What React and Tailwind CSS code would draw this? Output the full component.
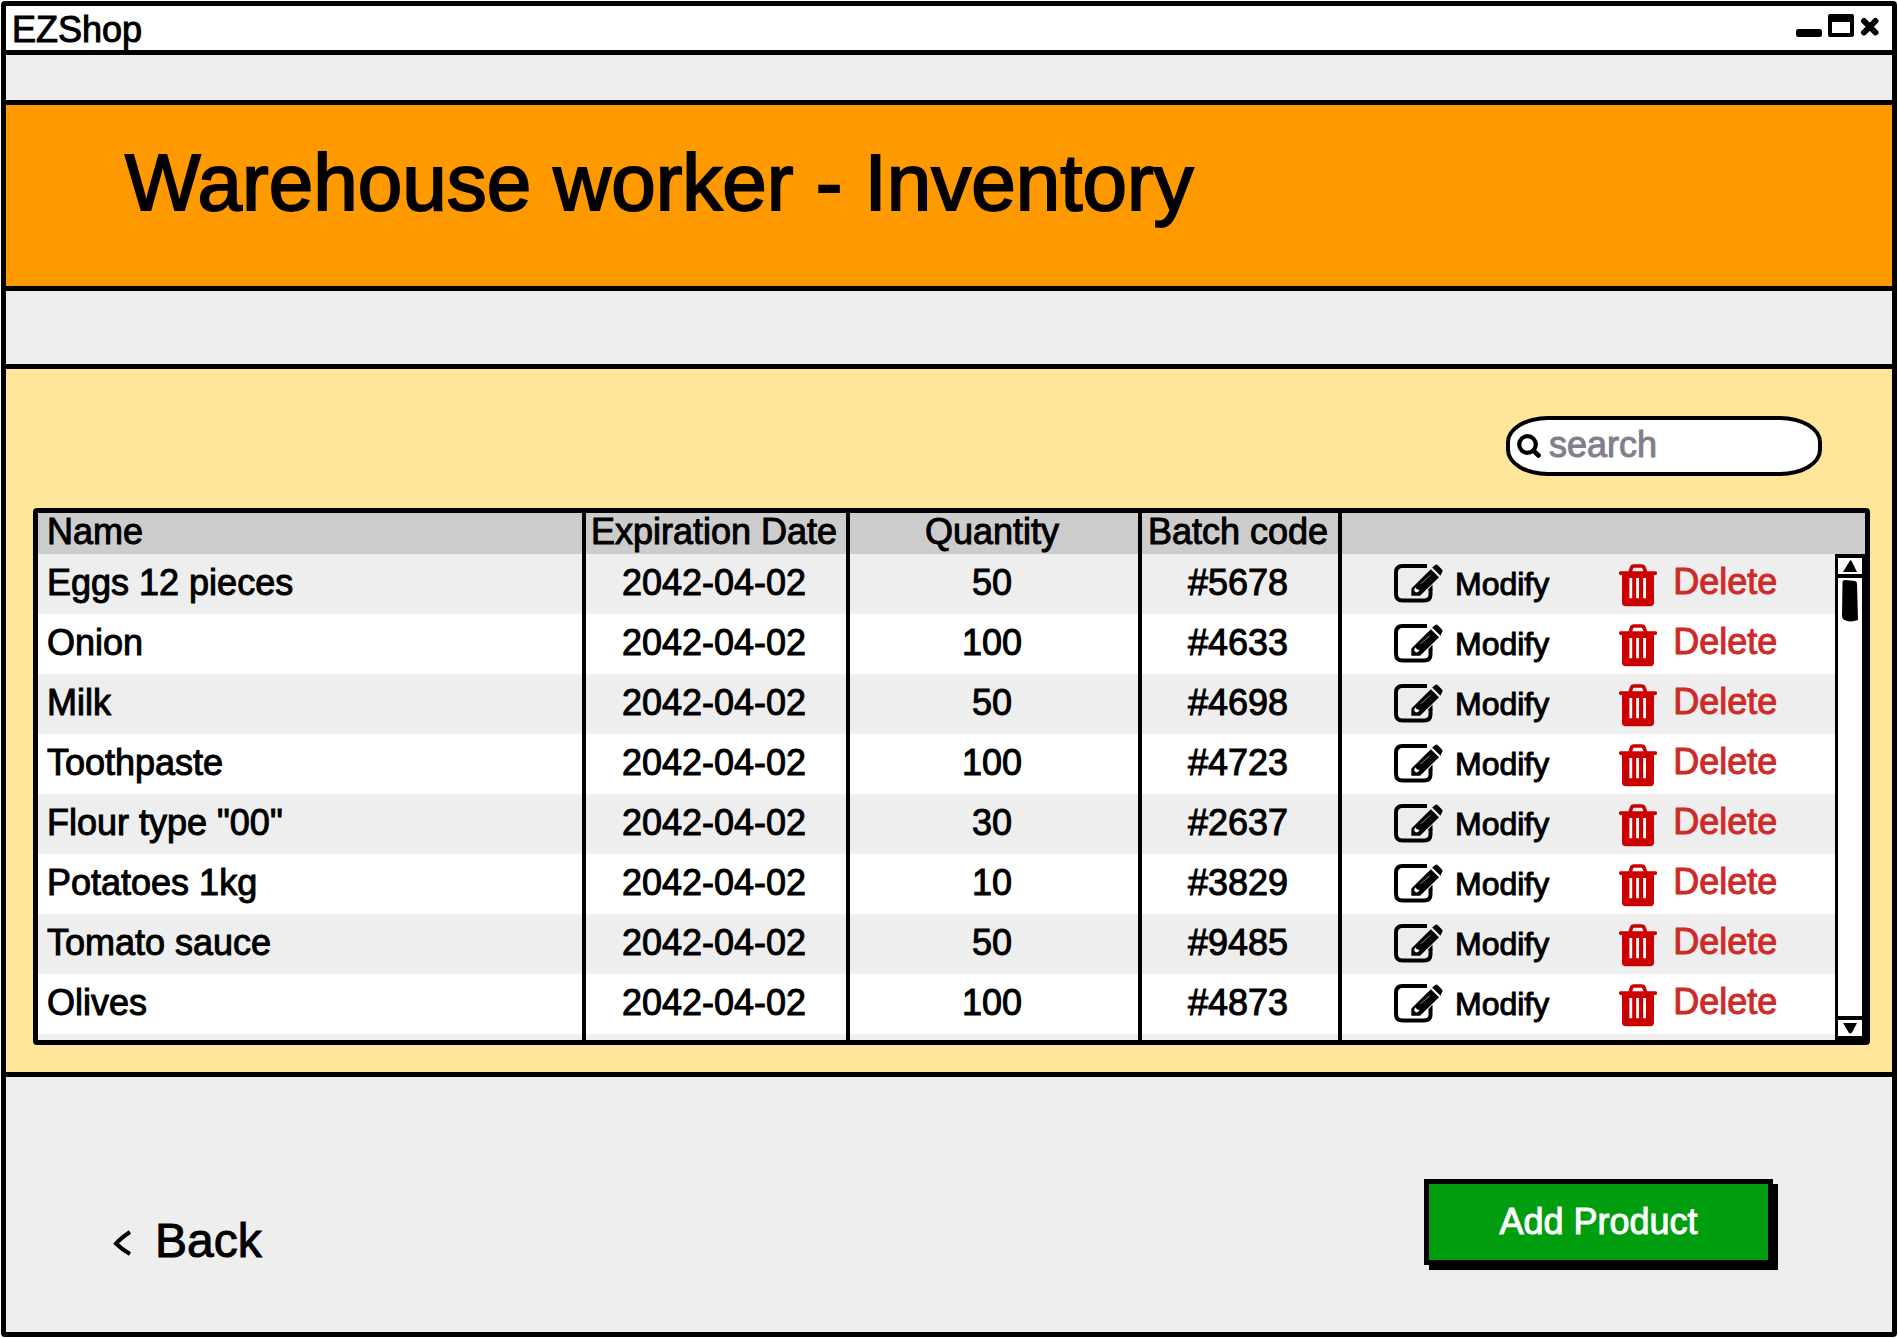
import React from "react";

const products = [
  { name: "Eggs 12 pieces", expires: "2042-04-02", quantity: 50, batch: "#5678" },
  { name: "Onion", expires: "2042-04-02", quantity: 100, batch: "#4633" },
  { name: "Milk", expires: "2042-04-02", quantity: 50, batch: "#4698" },
  { name: "Toothpaste", expires: "2042-04-02", quantity: 100, batch: "#4723" },
  { name: 'Flour type "00"', expires: "2042-04-02", quantity: 30, batch: "#2637" },
  { name: "Potatoes 1kg", expires: "2042-04-02", quantity: 10, batch: "#3829" },
  { name: "Tomato sauce", expires: "2042-04-02", quantity: 50, batch: "#9485" },
  { name: "Olives", expires: "2042-04-02", quantity: 100, batch: "#4873" },
];

function EditIcon() {
  return (
    <svg width="49" height="39" viewBox="0 0 49 39" fill="none" aria-hidden="true" className="shrink-0">
      <path d="M33 2H8.5Q2 2 2 8.5V30Q2 36.5 8.5 36.5H30Q36.5 36.5 36.5 30.5V25" stroke="#000" strokeWidth="4" />
      <path d="M34.5 26V25.3L38.5 20.5V26Z" fill="#000" />
      <path d="M17.4 31.7V24.6L36.8 5.2L45 13.2L26 31.7Z" fill="#000" />
      <path d="M38.2 3.6L41.2 0.9Q42.3 0 43.6 1.1L48 5.6Q49.1 7 48 8.2L46.4 11.8Z" fill="#000" />
      <path d="M26.5 20L36 11.6" stroke="#8a8a8a" strokeWidth="1" />
      <path d="M21.3 23.2L22.9 25.3L25.6 26L23.8 28.2H21.6L20 26.3Z" fill="#fff" />
    </svg>
  );
}

function TrashIcon() {
  return (
    <svg width="38" height="43" viewBox="0 0 38 43" aria-hidden="true" className="shrink-0">
      <path d="M11 8.5L12.4 4Q13 2 15 2H22.5Q24.6 2 25.2 4L26.6 8.5" fill="none" stroke="#c00" strokeWidth="3.6" />
      <rect x="0" y="7.3" width="38" height="3.6" rx="1.4" fill="#c00" />
      <path d="M3 9H35V38.5Q35 42.3 31.2 42.3H6.8Q3 42.3 3 38.5Z" fill="#c00" />
      <path d="M11.8 14V34.2M18.6 14V34.2M25.6 14V34.2" stroke="#fff" strokeWidth="2.8" />
    </svg>
  );
}

function WindowControls() {
  return (
    <div className="flex items-start gap-1.5 pt-2 pr-3">
      <button type="button" aria-label="Minimize">
        <svg width="26" height="23" viewBox="0 0 26 23" className="block">
          <rect x="0" y="15" width="26" height="8" rx="2.5" />
        </svg>
      </button>
      <button type="button" aria-label="Maximize">
        <svg width="26" height="23" viewBox="0 0 26 23" className="block">
          <path fillRule="evenodd" d="M2 0H24Q26 0 26 2V21Q26 23 24 23H2Q0 23 0 21V2Q0 0 2 0ZM4 8V19H22V8Z" />
        </svg>
      </button>
      <button type="button" aria-label="Close">
        <svg width="20" height="23" viewBox="0 0 20 23" className="block">
          <path d="M4 7L15.5 18.5M15.5 7L4 18.5" stroke="#000" strokeWidth="6" strokeLinecap="round" />
        </svg>
      </button>
    </div>
  );
}

function ScrollBar() {
  return (
    <div className="absolute top-[41px] right-0 bottom-0 flex w-[30px] flex-col border-x-[3px] border-t-4 border-black bg-white">
      <button type="button" aria-label="Scroll up" className="flex h-5 items-center justify-center border-b-4 border-black">
        <svg width="16" height="12" viewBox="0 0 16 12">
          <path d="M8 0.5Q9 0 9.6 1L15 12H1Z" />
        </svg>
      </button>
      <div className="flex flex-1 justify-center pt-0.5">
        <svg width="16" height="42" viewBox="0 0 16 42">
          <path d="M0.5 2Q0.5 0 3 0L13 1Q15 1.5 15 4L16 40Q8 43 1.5 39.5Q0 38 0 36Z" />
        </svg>
      </div>
      <button type="button" aria-label="Scroll down" className="flex h-6 items-center justify-center border-y-4 border-black">
        <svg width="16" height="12" viewBox="0 0 16 12">
          <path d="M1 1H15L10 10.5Q8.5 12 7 11Z" />
        </svg>
      </button>
    </div>
  );
}

function InventoryTable() {
  return (
    <div className="relative rounded-sm border-[5px] border-black bg-white">
      <table className="w-full table-fixed border-separate border-spacing-0 text-[36px] leading-[36px]">
        <colgroup>
          <col />
          <col className="w-[264px]" />
          <col className="w-[292px]" />
          <col className="w-[200px]" />
          <col className="w-[527px]" />
        </colgroup>
        <thead>
          <tr className="bg-[#cccccc]">
            <th className="h-[41px] p-0 pt-px pl-[9px] text-left align-top font-normal">Name</th>
            <th className="border-l-4 border-black p-0 pt-px pr-1 align-top font-normal whitespace-nowrap">Expiration Date</th>
            <th className="border-l-4 border-black p-0 pt-px pr-1 align-top font-normal">Quantity</th>
            <th className="border-l-4 border-black p-0 pt-px pr-1 align-top font-normal whitespace-nowrap">Batch code</th>
            <th className="border-l-4 border-black p-0" aria-label="Actions" />
          </tr>
        </thead>
        <tbody>
          {products.map((product) => (
            <tr key={product.name} className="odd:bg-[#eeeeee] even:bg-white">
              <td className="h-[60px] pt-[11px] pl-[9px] align-top">{product.name}</td>
              <td className="border-l-4 border-black pt-[11px] pr-1 text-center align-top">{product.expires}</td>
              <td className="border-l-4 border-black pt-[11px] pr-1 text-center align-top">{product.quantity}</td>
              <td className="border-l-4 border-black pt-[11px] pr-1 text-center align-top">{product.batch}</td>
              <td className="border-l-4 border-black pt-2.5 pl-[52px] align-top">
                <div className="flex items-start gap-[70px]">
                  <button type="button" className="flex items-center gap-3 text-[32px] leading-8 [-webkit-text-stroke:1px]">
                    <EditIcon />
                    Modify
                  </button>
                  <button type="button" className="flex items-start gap-4 text-[36px] leading-[36px] text-[#cf2a27] [-webkit-text-stroke:1px]">
                    <TrashIcon />
                    Delete
                  </button>
                </div>
              </td>
            </tr>
          ))}
          <tr className="bg-[#eeeeee]" aria-hidden="true">
            <td className="h-1.5 p-0" />
            <td className="border-l-4 border-black p-0" />
            <td className="border-l-4 border-black p-0" />
            <td className="border-l-4 border-black p-0" />
            <td className="border-l-4 border-black p-0" />
          </tr>
        </tbody>
      </table>
      <ScrollBar />
    </div>
  );
}

export default function App() {
  return (
    <div className="flex min-h-screen flex-col bg-white p-px font-['Liberation_Sans',Arial,sans-serif] text-black [-webkit-text-stroke:1px]">
      <div className="flex flex-1 flex-col rounded-sm border-[5px] border-black bg-[#eeeeee]">
        <div className="flex justify-between border-b-[5px] border-black bg-white">
          <div className="pt-1.5 pb-0.5 pl-1.5 text-[36px] leading-[36px]">EZShop</div>
          <WindowControls />
        </div>

        <header className="mt-[45px] border-y-[5px] border-black bg-[#ff9900] pt-[38px] pb-[63px] pl-[119px]">
          <h1 className="text-[80px] leading-[80px] [-webkit-text-stroke:2px]">Warehouse worker - Inventory</h1>
        </header>

        <main className="mt-[73px] border-y-[5px] border-black bg-[#ffe599] pt-[47px] pr-[22px] pb-[27px] pl-[27px]">
          <div className="mb-8 flex justify-end pr-12">
            <label className="flex h-[60px] w-[316px] items-center gap-2 rounded-[42px/26px] border-4 border-black bg-white pr-4 pl-[7px]">
              <svg width="24" height="24" viewBox="0 0 24 24" fill="none" stroke="#000" aria-hidden="true" className="shrink-0">
                <circle cx="10.5" cy="10.5" r="8.3" strokeWidth="4.2" />
                <path d="M16.5 16.5L21.5 21.5" strokeWidth="4.6" strokeLinecap="round" />
              </svg>
              <input
                type="text"
                aria-label="search"
                placeholder="search"
                className="w-full min-w-0 bg-transparent pb-0.5 text-[36px] leading-[40px] outline-none placeholder:text-[#80808c] [-webkit-text-stroke:1px]"
              />
            </label>
          </div>
          <InventoryTable />
        </main>

        <footer className="flex flex-1 items-start justify-between pt-[102px] pr-[119px] pb-[67px] pl-[107px]">
          <a href="#back" className="flex items-center gap-[23px] self-end text-[48px] leading-[48px]">
            <svg width="19" height="28" viewBox="0 0 19 28" fill="none" stroke="#000" strokeWidth="4" aria-hidden="true" className="mt-1">
              <path d="M17 3Q8 9 3 14.5Q9 20.500 17 25" />
            </svg>
            Back
          </a>
          <button
            type="button"
            className="h-[86px] w-[349px] border-[5px] border-black bg-[#009e0f] text-[36px] leading-[36px] text-white shadow-[5px_5px_0_0_#000] [-webkit-text-stroke:1px]"
          >
            Add Product
          </button>
        </footer>
      </div>
    </div>
  );
}
